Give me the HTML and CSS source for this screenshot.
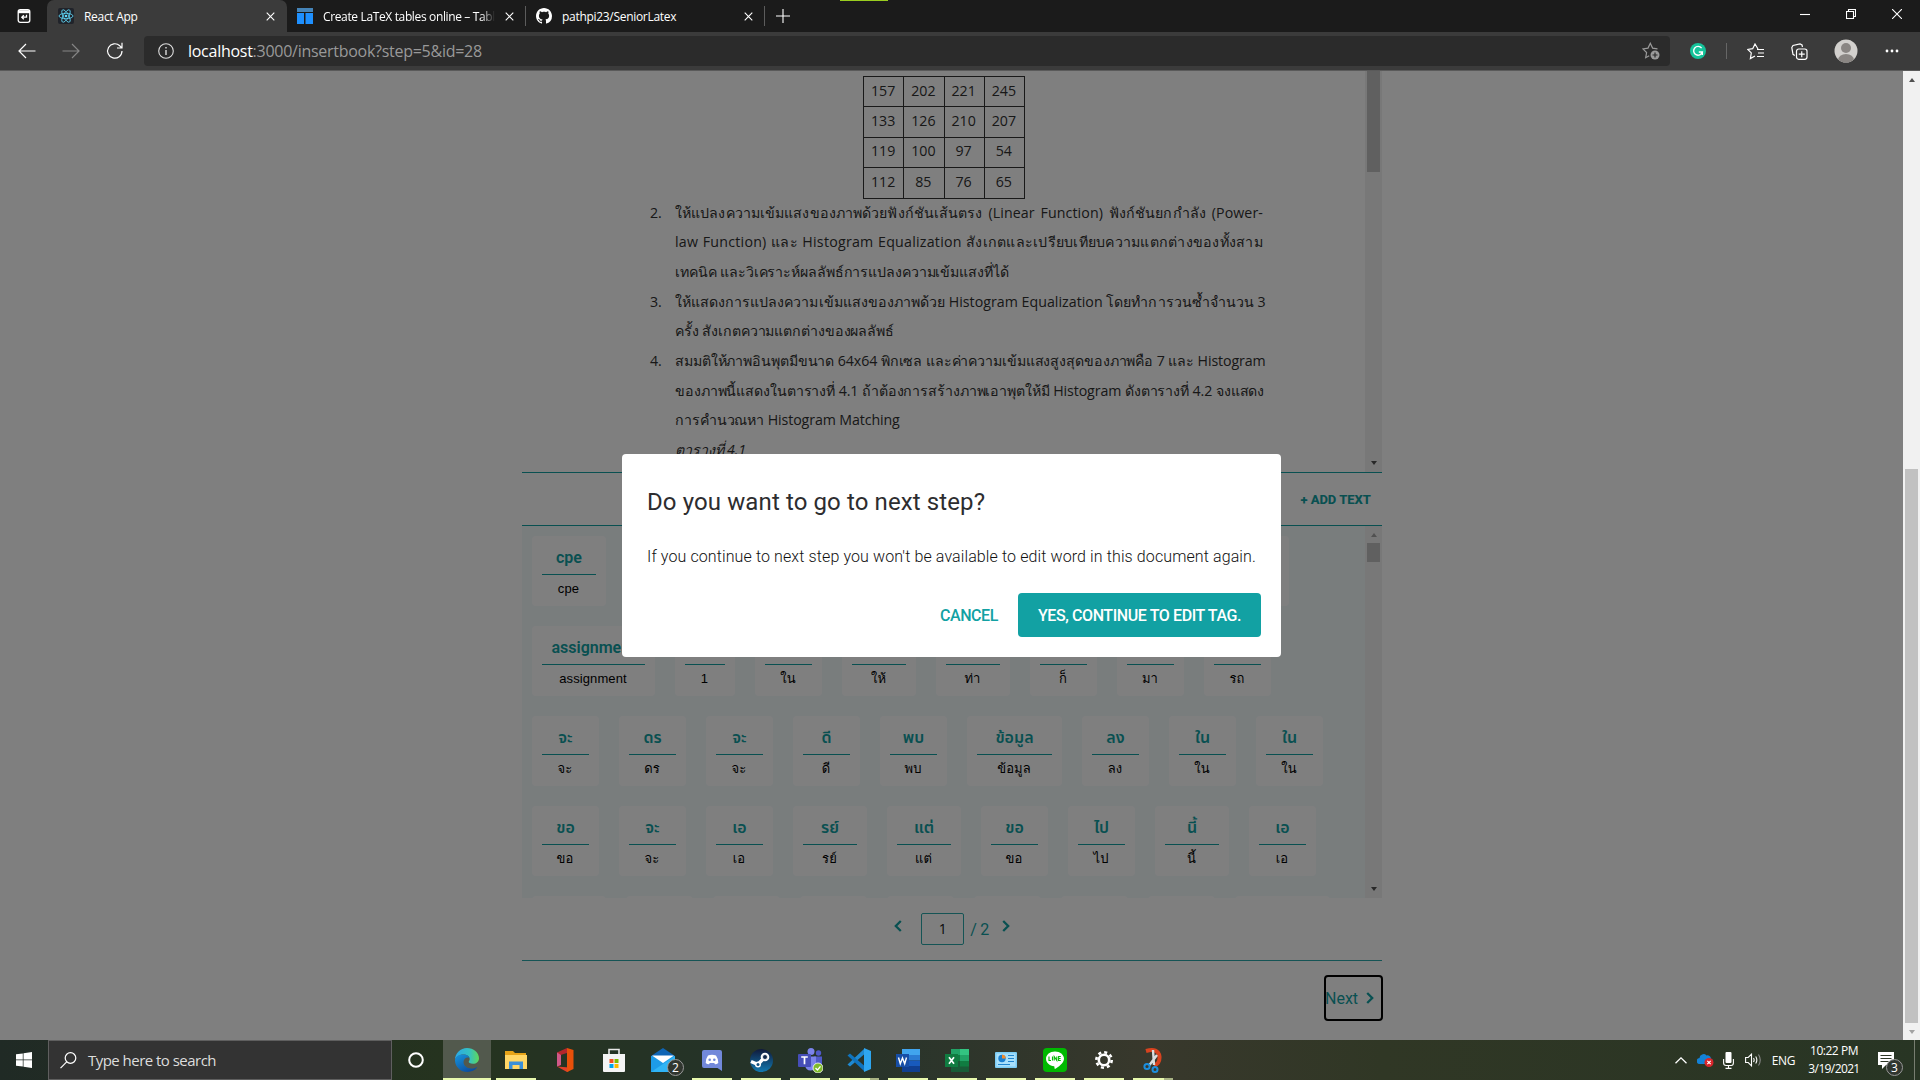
FILE: index.html
```
<!DOCTYPE html>
<html lang="th">
<head>
<meta charset="utf-8">
<title>React App</title>
<link rel="stylesheet" href="styles.css">
</head>
<body>
<div class="desktop">
  <header class="tabs">
    <svg class="tab-menu" width="16" height="16" viewBox="0 0 16 16" fill="none" stroke="#fff" stroke-width="1.3"><rect x="2.2" y="1.7" width="11.6" height="12.6" rx="2"/><path d="M2 3.7h12" stroke-width="3"/><path d="M10.5 6.8v2.4H5.8M7.8 7.2l-2 2 2 2"/></svg>
    <div class="tab active">
      <svg width="16" height="16" viewBox="0 0 16 16"><rect width="16" height="16" rx="2" fill="#20232a"/><g fill="none" stroke="#61dafb" stroke-width=".8"><ellipse cx="8" cy="8" rx="7" ry="2.7"/><ellipse cx="8" cy="8" rx="7" ry="2.7" transform="rotate(60 8 8)"/><ellipse cx="8" cy="8" rx="7" ry="2.7" transform="rotate(120 8 8)"/></g><circle cx="8" cy="8" r="1.3" fill="#61dafb"/></svg>
      <span class="tab-title">React App</span>
      <svg class="x" width="9" height="9" viewBox="0 0 9 9"><path d="M.7.7l7.6 7.6M8.3.7L.7 8.3"/></svg>
    </div>
    <div class="tab second">
      <svg width="16" height="16" viewBox="0 0 16 16"><path d="M0 0h16v4H0z" fill="#4584b8"/><path d="M0 5h7v11H0zM8.500 5H16v11H8.500z" fill="#1e90ff"/></svg>
      <span class="tab-title clip">Create LaTeX tables online – Tabl</span>
      <svg class="x" width="9" height="9" viewBox="0 0 9 9"><path d="M.7.7l7.6 7.6M8.3.7L.7 8.3"/></svg>
    </div>
    <div class="tab third">
      <svg width="16" height="16" viewBox="0 0 16 16" fill="#fff"><path d="M8 0C3.58 0 0 3.58 0 8c0 3.54 2.29 6.53 5.47 7.59.4.07.55-.17.55-.38 0-.19-.01-.82-.01-1.490-2.010.37-2.530-.49-2.690-.94-.09-.23-.48-.94-.82-1.130-.28-.15-.68-.52-.01-.53.63-.01 1.080.58 1.230.82.72 1.210 1.870.87 2.330.66.07-.52.28-.87.51-1.070-1.780-.2-3.640-.89-3.640-3.950 0-.87.31-1.590.82-2.150-.08-.2-.36-1.020.08-2.120 0 0 .67-.21 2.200.82.64-.18 1.320-.27 2-.27s1.360.09 2 .27c1.530-1.040 2.200-.82 2.200-.82.44 1.100.16 1.920.08 2.120.51.56.82 1.270.82 2.150 0 3.070-1.870 3.750-3.650 3.950.29.25.54.73.54 1.480 0 1.070-.01 1.930-.01 2.200 0 .21.15.46.55.38A8.010 8.010 0 0 0 16 8c0-4.420-3.580-8-8-8z"/></svg>
      <span class="tab-title">pathpi23/SeniorLatex</span>
      <svg class="x" width="9" height="9" viewBox="0 0 9 9"><path d="M.7.7l7.6 7.6M8.3.7L.7 8.3"/></svg>
    </div>
    <svg class="plus" width="14" height="14" viewBox="0 0 14 14"><path d="M7 0v14M0 7h14"/></svg>
    <i class="green-mark"></i>
    <div class="window-buttons">
      <svg width="10" height="10" viewBox="0 0 10 10"><path d="M0 5.500h10"/></svg>
      <svg width="10" height="10" viewBox="0 0 10 10"><path d="M.5 2.500h7v7h-7zM2.500 2.500v-2h7v7h-2"/></svg>
      <svg width="10" height="10" viewBox="0 0 10 10"><path d="M0 0l10 10M10 0L0 10"/></svg>
    </div>
  </header>

  <nav class="toolbar">
    <svg class="nav-icon" width="18" height="16" viewBox="0 0 18 16"><path d="M17.500 8H1M8 1L1 8l7 7"/></svg>
    <svg class="nav-icon dim" width="18" height="16" viewBox="0 0 18 16"><path d="M.5 8H17M10 1l7 7-7 7"/></svg>
    <svg class="nav-icon" width="18" height="18" viewBox="0 0 18 18"><path d="M16 9a7.200 7.200 0 1 1-2.200-5.200L15.800 6M16 .8V6h-5"/></svg>
    <div class="address">
      <svg width="16" height="16" viewBox="0 0 16 16" fill="none" stroke="#ddd" stroke-width="1.100"><circle cx="8" cy="8" r="7.300"/><path d="M8 7v5M8 4v1.500" stroke-width="1.400"/></svg>
      <span class="url"><b>localhost</b>:3000/insertbook?step=5&amp;id=28</span>
      <svg class="fav" width="18" height="18" viewBox="0 0 18 18" fill="none" stroke="#9a9a9a" stroke-width="1.200"><path d="M15.500 6.800l-4.900-.7L8.300 1.300 6 6.100.9 6.900l3.700 3.600-.9 5.200 3.500-1.900"/><circle cx="13" cy="13" r="4.500" fill="#9a9a9a" stroke="none"/><path d="M13 10.500v5M10.500 13h5" stroke="#2b2b2b"/></svg>
    </div>
    <svg class="gram" width="16" height="16" viewBox="0 0 16 16"><circle cx="8" cy="8" r="8" fill="#15c39a"/><path d="M11.600 5.200A4.400 4.400 0 1 0 12.300 9H8.800M12.300 9v3" fill="none" stroke="#fff" stroke-width="1.400"/></svg>
    <i class="bar-sep"></i>
    <svg class="star-list" width="17" height="17" viewBox="0 0 17 17" fill="none" stroke="#fff" stroke-width="1.200"><path d="M11 6L8 1 5.700 5.700.8 6.400l3.500 3.500-.9 5.600 4.600-2.600M10 6.500h7M11 10h6M10 13.500h7"/></svg>
    <svg class="collections" width="17" height="17" viewBox="0 0 17 17" fill="none" stroke="#fff" stroke-width="1.200"><path d="M3.800 12.500L2 11.300.8 4.500 2 2.500 9 .8l2 1.200.5 2"/><rect x="5.500" y="6" width="10.500" height="10.300" rx="2.200"/><path d="M10.750 8.200v6M7.750 11.200h6"/></svg>
    <svg class="avatar" width="24" height="24" viewBox="0 0 24 24"><clipPath id="face"><circle cx="12" cy="12" r="11.500"/></clipPath><g clip-path="url(#face)"><path d="M0 0h24v24H0z" fill="#d2d0cd"/><circle cx="12" cy="9" r="5" fill="#8a8683"/><ellipse cx="12" cy="21" rx="8" ry="6" fill="#8a8683"/></g></svg>
    <svg class="dots" width="14" height="4" viewBox="0 0 14 4" fill="#fff"><circle cx="2" cy="2" r="1.400"/><circle cx="7" cy="2" r="1.400"/><circle cx="12" cy="2" r="1.400"/></svg>
  </nav>

  <main class="page">
    <div class="view">
      <div class="column">
        <section class="doc-pane">
          <div class="doc">
            <table class="matrix">
              <tr><td>157</td><td>202</td><td>221</td><td>245</td></tr>
              <tr><td>133</td><td>126</td><td>210</td><td>207</td></tr>
              <tr class="faint"><td>119</td><td>100</td><td>97</td><td>54</td></tr>
              <tr><td>112</td><td>85</td><td>76</td><td>65</td></tr>
            </table>
            <div class="item"><span>2.</span><div>
              <p class="full loose">ให้แปลงความเข้มแสงของภาพด้วยฟังก์ชันเส้นตรง (Linear Function) ฟังก์ชันยกกำลัง (Power-</p>
              <p class="full looser">law Function) และ Histogram Equalization สังเกตและเปรียบเทียบความแตกต่างของทั้งสาม</p>
              <p>เทคนิค และวิเคราะห์ผลลัพธ์การแปลงความเข้มแสงที่ได้</p></div></div>
            <div class="item"><span>3.</span><div>
              <p class="full even">ให้แสดงการแปลงความเข้มแสงของภาพด้วย Histogram Equalization โดยทำการวนซ้ำจำนวน 3</p>
              <p>ครั้ง สังเกตความแตกต่างของผลลัพธ์</p></div></div>
            <div class="item"><span>4.</span><div>
              <p class="full">สมมติให้ภาพอินพุตมีขนาด 64x64 พิกเซล และค่าความเข้มแสงสูงสุดของภาพคือ 7 และ Histogram</p>
              <p class="full">ของภาพนี้แสดงในตารางที่ 4.1 ถ้าต้องการสร้างภาพเอาพุตให้มี Histogram ดังตารางที่ 4.2 จงแสดง</p>
              <p>การคำนวณหา Histogram Matching</p>
              <p class="caption">ตารางที่ 4.1</p></div></div>
          </div>
          <div class="scroll doc-scroll"><i class="thumb"></i><i class="down"></i></div>
        </section>
        <div class="text-bar">+ ADD TEXT</div>
        <section class="words-pane">
          <div class="words">
            <div class="row first"><div class="card w74"><b>cpe</b><span>cpe</span></div><div class="card w67"><b></b></div></div>
            <div class="row">
              <div class="card w123"><b>assignment</b><span>assignment</span></div>
              <div class="card w60"><b>1</b><span>1</span></div>
              <div class="card w67"><b>ใน</b><span>ใน</span></div>
              <div class="card w74"><b>ให้</b><span>ให้</span></div>
              <div class="card w74"><b>ท่า</b><span>ท่า</span></div>
              <div class="card w67"><b>ก็</b><span>ก็</span></div>
              <div class="card w67"><b>มา</b><span>มา</span></div>
              <div class="card w67"><b>รถ</b><span>รถ</span></div>
            </div>
            <div class="row">
              <div class="card w67"><b>จะ</b><span>จะ</span></div>
              <div class="card w67"><b>ดร</b><span>ดร</span></div>
              <div class="card w67"><b>จะ</b><span>จะ</span></div>
              <div class="card w67"><b>ดี</b><span>ดี</span></div>
              <div class="card w67"><b>พบ</b><span>พบ</span></div>
              <div class="card w95"><b>ข้อมูล</b><span>ข้อมูล</span></div>
              <div class="card w67"><b>ลง</b><span>ลง</span></div>
              <div class="card w67"><b>ใน</b><span>ใน</span></div>
              <div class="card w67"><b>ใน</b><span>ใน</span></div>
            </div>
            <div class="row">
              <div class="card w67"><b>ขอ</b><span>ขอ</span></div>
              <div class="card w67"><b>จะ</b><span>จะ</span></div>
              <div class="card w67"><b>เอ</b><span>เอ</span></div>
              <div class="card w74"><b>รย์</b><span>รย์</span></div>
              <div class="card w74"><b>แต่</b><span>แต่</span></div>
              <div class="card w67"><b>ขอ</b><span>ขอ</span></div>
              <div class="card w67"><b>ไป</b><span>ไป</span></div>
              <div class="card w74"><b>นี้</b><span>นี้</span></div>
              <div class="card w67"><b>เอ</b><span>เอ</span></div>
            </div>
            <div class="row">
              <div class="card w74"></div><div class="card w67"></div><div class="card w67"></div><div class="card w67"></div><div class="card w67"></div><div class="card w67"></div><div class="card w67"></div><div class="card w67"></div><div class="card w95"></div>
            </div>
          </div>
          <div class="scroll words-scroll"><i class="up"></i><i class="thumb"></i><i class="down"></i></div>
        </section>
        <div class="pager">
          <svg width="8" height="12" viewBox="0 0 8 12"><path d="M6.800 1L1.800 6l5 5"/></svg>
          <span class="page-box">1</span>
          <span class="total">/ 2</span>
          <svg width="8" height="12" viewBox="0 0 8 12"><path d="M1.200 1l5 5-5 5"/></svg>
        </div>
        <div class="footer"><div class="next">Next<svg width="8" height="12" viewBox="0 0 8 12"><path d="M1.200 1l5 5-5 5"/></svg></div></div>
      </div>
      <div class="backdrop">
        <div class="dialog">
          <h2>Do you want to go to next step?</h2>
          <p>If you continue to next step you won't be available to edit word in this document again.</p>
          <div class="actions"><span class="cancel">CANCEL</span><span class="confirm">YES, CONTINUE TO EDIT TAG.</span></div>
        </div>
      </div>
    </div>
    <div class="scroll page-scroll"><i class="up"></i><i class="thumb"></i><i class="down"></i></div>
  </main>

  <footer class="taskbar">
    <div class="start"><svg width="16" height="16" viewBox="0 0 16 16" fill="#fff"><path d="M0 2.300l6.800-.9v6.200H0zM7.500 1.300L16 .1v7.500H7.500zM0 8.300h6.800v6.300L0 13.700zM7.500 8.300H16v7.600l-8.500-1.200z"/></svg></div>
    <div class="search"><svg width="17" height="17" viewBox="0 0 17 17" fill="none" stroke="#fff" stroke-width="1.200"><circle cx="10.500" cy="6" r="5.300"/><path d="M6.700 9.800L.5 16.200"/></svg><span>Type here to search</span></div>
    <div class="apps">
      <div class="app"><svg width="16" height="16" viewBox="0 0 16 16"><circle cx="8" cy="8" r="6.800" fill="none" stroke="#fff" stroke-width="2"/></svg></div>
      <div class="app current"><svg width="24" height="24" viewBox="0 0 24 24"><defs><linearGradient id="e1" x1="0" x2="1"><stop offset="0" stop-color="#2aa8e8"/><stop offset=".6" stop-color="#35c1c1"/><stop offset="1" stop-color="#5fd85a"/></linearGradient><linearGradient id="e2" x1="0" x2=".7" y2="1"><stop offset="0" stop-color="#1795dc"/><stop offset="1" stop-color="#0c4c9e"/></linearGradient></defs><path d="M0 12C0 5 5.500 0 12 0s12 4.700 12 10.200c0 3.400-2.600 5.600-6 5.600-3 0-4.300-1.200-4.300-2 0-.6 1-1.100 1-2.800C14.700 8.500 12 6.500 8.500 6.500 4 6.500.6 9 0 12z" fill="url(#e1)"/><path d="M0 12c.4-3.500 4-5.500 8.500-5.500 3.300 0 5.500 1.600 6 3.400-2.300-1.400-6 .3-6 4.100 0 3.600 3.500 6.500 8 6.500 2 0 3.700-.6 5-1.300.5-.2.700 0 .5.400C20 22.500 16.500 24 12.500 24 5.500 24-.2 18.500 0 12z" fill="url(#e2)"/></svg></div>
      <div class="app open"><svg width="22" height="20" viewBox="0 0 22 20"><path d="M0 1h8l2 2h11v4H0z" fill="#e6a318"/><path d="M0 5h22v14H0z" fill="#ffd666"/><path d="M4 19v-7.500h14V19h-3.500v-4h-7v4z" fill="#3a8fd8"/></svg></div>
      <div class="app"><svg width="20" height="24" viewBox="0 0 20 24"><path d="M12 0L2 4.500v14L5.500 17V7L12 5z" fill="#b4262c"/><path d="M2 18.500L12 24l2-1v-3.500z" fill="#e0402a"/><path d="M2 4.500v14L6 17V7z" fill="#d05888"/><path d="M12 0l6.500 2v19L12 24z" fill="#e8500a"/></svg></div>
      <div class="app"><svg width="24" height="24" viewBox="0 0 24 24"><path d="M7 7V1.500h10V7" fill="none" stroke="#e8e8e8" stroke-width="1.600"/><path d="M1 6h22v17a1 1 0 0 1-1 1H2a1 1 0 0 1-1-1z" fill="#f5f5f5"/><path d="M7.500 11h4v4h-4z" fill="#f25022"/><path d="M12.500 11h4v4h-4z" fill="#7fba00"/><path d="M7.500 16h4v4h-4z" fill="#00a4ef"/><path d="M12.500 16h4v4h-4z" fill="#ffb900"/></svg></div>
      <div class="app mail"><svg width="24" height="24" viewBox="0 0 24 24"><path d="M0 8l12-8 12 8v4H0z" fill="#0f65b5"/><path d="M0 8h24v16H0z" fill="#1d9be8"/><path d="M0 24L24 8v16z" fill="#2fb4f5"/><path d="M1 7.500h22L12 15z" fill="#fff"/></svg><span class="badge">2</span></div>
      <div class="app open"><svg width="20" height="21" viewBox="0 0 20 21"><path d="M2 0h16a2 2 0 0 1 2 2v19l-4.500-3H2a2 2 0 0 1-2-2V2a2 2 0 0 1 2-2z" fill="#7289da"/><path d="M6 5.500q4-1.500 8 0 2.500 3.500 2.300 7.500Q14.500 14.500 13 14.300l-.8-1.300H7.800L7 14.300Q5 14.300 3.700 13 3.500 9 6 5.500z" fill="#fff"/><circle cx="7.700" cy="9.700" r="1.300" fill="#7289da"/><circle cx="12.300" cy="9.700" r="1.300" fill="#7289da"/></svg></div>
      <div class="app open"><svg width="23" height="23" viewBox="0 0 23 23"><defs><linearGradient id="st" y2="1" x2="0"><stop offset="0" stop-color="#10193a"/><stop offset="1" stop-color="#1279b0"/></linearGradient></defs><circle cx="11.500" cy="11.500" r="11.500" fill="url(#st)"/><path d="M1 12.500l7 3L14 9" fill="none" stroke="#fff" stroke-width="3.500"/><circle cx="15" cy="8" r="4.300" fill="#fff"/><circle cx="15" cy="8" r="2.500" fill="#10284a" stroke="#fff" stroke-width=".8"/><circle cx="8" cy="15.500" r="3" fill="#fff"/><circle cx="8" cy="15.500" r="1.500" fill="#12507e"/></svg></div>
      <div class="app open"><svg width="25" height="25" viewBox="0 0 25 25"><circle cx="20.500" cy="5" r="2.700" fill="#5059c9"/><circle cx="13" cy="3.500" r="3.500" fill="#7b83eb"/><path d="M16 8.500h8v7a4 4 0 0 1-8 2z" fill="#5059c9"/><path d="M7 8.500h11V17a5.500 5.500 0 0 1-11 0z" fill="#7b83eb"/><rect y="6" width="13" height="13" rx="1" fill="#464eb8"/><path d="M3.200 9h6.600M6.500 9v7.300" stroke="#fff" stroke-width="1.700"/><circle cx="20" cy="20" r="5" fill="#7fba2a" stroke="#fff" stroke-width=".8"/><path d="M17.500 20l2 2 3-3.700" fill="none" stroke="#fff" stroke-width="1.300"/></svg></div>
      <div class="app open more"><svg width="24" height="24" viewBox="0 0 24 24"><path d="M17 6.500L3 18.500l-2.500-2L17 1z" fill="#1f8ad2"/><path d="M17 17.500L3 5.500l-2.500 2L17 23z" fill="#0f74bf"/><path d="M17 0l7 3v18l-7 3z" fill="#2ea6f0"/></svg></div>
      <div class="app open"><svg width="24" height="23" viewBox="0 0 24 23"><path d="M6 0h18v6H6z" fill="#41a5ee"/><path d="M6 6h18v5.500H6z" fill="#2b7cd3"/><path d="M6 11.500h18V17H6z" fill="#185abd"/><path d="M6 17h18v6H6z" fill="#103f91"/><path d="M0 5h13v13H0z" fill="#174ea6"/><path d="M2.500 8.500l1.800 6.200L6.500 9l2.200 5.700 1.800-6.200" fill="none" stroke="#fff" stroke-width="1.400"/></svg></div>
      <div class="app open"><svg width="24" height="23" viewBox="0 0 24 23"><path d="M6 0h9v6H6z" fill="#21a366"/><path d="M15 0h9v6h-9z" fill="#33c481"/><path d="M6 6h9v6H6z" fill="#107c41"/><path d="M15 6h9v6h-9z" fill="#21a366"/><path d="M6 12h18v11H6z" fill="#185c37"/><path d="M15 12h9v5.500h-9z" fill="#107c41"/><path d="M0 5h13v13H0z" fill="#107c41"/><path d="M4 8.300l5 6.500M9 8.300l-5 6.500" stroke="#fff" stroke-width="1.700"/></svg></div>
      <div class="app open"><svg width="22" height="16" viewBox="0 0 22 16"><rect width="22" height="16" rx="1" fill="#7ccdf5"/><rect x="1.500" y="1.500" width="19" height="13" fill="#a9e0fb"/><circle cx="7" cy="6.500" r="3.700" fill="#1a7fd0"/><path d="M7 6.500V2.800a3.700 3.700 0 0 1 3.700 3.700z" fill="#f58a2a"/><path d="M13 3.500h6M13 6.500h6M13 9.500h6M3 12.500h12" stroke="#2085cf" stroke-width="1.200"/></svg></div>
      <div class="app open"><svg width="24" height="24" viewBox="0 0 24 24"><rect width="24" height="24" rx="4" fill="#00b900"/><path d="M12 3.500c5 0 9 3.200 9 7.200 0 4.300-6 8.500-9 10.300-.6 0-.4-2-.8-2.700C6.500 17.800 3 14.700 3 10.700c0-4 4-7.200 9-7.200z" fill="#fff"/><path d="M6 8.500v4h2M9.500 8.500v4M11.200 12.500v-4l2.600 4v-4M17.800 8.500h-2.200v4h2.200M15.600 10.500h2" fill="none" stroke="#00b900" stroke-width="1.100"/></svg></div>
      <div class="app open"><svg width="18" height="18" viewBox="0 0 18 18" fill="none" stroke="#fff"><circle cx="9" cy="9" r="5.200" stroke-width="2.600"/><circle cx="9" cy="9" r="7.700" stroke-width="2.600" stroke-dasharray="3.020 3.020"/></svg></div>
      <div class="app open more"><svg width="20" height="25" viewBox="0 0 20 25"><path d="M3 3q12-3.500 13.500 5.500.5 7-5.500 9" fill="none" stroke="#d8431f" stroke-width="4"/><path d="M10 2l1 15M14 7L6.500 17" stroke="#d8dde0" stroke-width="2.400"/><circle cx="4" cy="18.500" r="2.600" fill="none" stroke="#1c8ede" stroke-width="2"/><circle cx="12" cy="21.500" r="2.500" fill="none" stroke="#1c8ede" stroke-width="2"/></svg></div>
    </div>
    <div class="tray">
      <svg width="12" height="7" viewBox="0 0 12 7" fill="none" stroke="#fff" stroke-width="1.300"><path d="M.5 6.300L6 .9l5.500 5.400"/></svg>
      <svg class="cloud" width="17" height="14" viewBox="0 0 17 14"><path d="M3 11a3 3 0 0 1-.5-6 4 4 0 0 1 7-2.500A3.500 3.500 0 0 1 14 5.500q1.500.5 1.500 2.500 0 3-3 3z" fill="#1382d8"/><circle cx="12" cy="9.500" r="4.500" fill="#d8262c"/><path d="M10.300 7.800l3.400 3.400M13.700 7.800l-3.400 3.400" stroke="#fff" stroke-width="1.200"/></svg>
      <svg class="mic" width="11" height="17" viewBox="0 0 11 17"><rect x="2.500" width="6" height="11" rx="1" fill="#fff"/><path d="M.6 7v4q0 2.500 2.500 2.500h5q2.300 0 2.300-2.500V7M5.500 13.500v3M2.500 16.400h6" fill="none" stroke="#fff" stroke-width="1.100"/></svg>
      <svg class="sound" width="17" height="14" viewBox="0 0 17 14" fill="none" stroke="#fff" stroke-width="1.100"><path d="M.6 4.500h2.600L6.500 1.200v11.600L3.200 9.500H.6zM8.500 5q1.300 2 0 4M10.700 3.500q2.300 3.500 0 7"/><path d="M13.500 1.500q3.500 5.500 0 11" stroke="#888"/></svg>
      <span class="lang">ENG</span>
      <div class="clock"><span>10:22 PM</span><span class="date">3/19/2021</span></div>
      <div class="notes"><svg width="16" height="17" viewBox="0 0 16 17"><path d="M0 0h16v13H8l-4 4v-4H0z" fill="#fff"/><path d="M2.500 3.500h11M2.500 6.500h11M2.500 9.500h8" stroke="#2d3726" stroke-width="1.100"/></svg><span class="badge">3</span></div>
      <i class="edge-line"></i>
    </div>
  </footer>
</div>
</body>
</html>
```
FILE: styles.css
```
* { box-sizing: border-box; }
body { margin: 0; overflow: hidden; }
svg { display: block; flex: none; }
p, h2 { margin: 0; }
.desktop { display: flex; flex-direction: column; width: 1920px; height: 1080px; font-family: "Open Sans", "Noto Sans", sans-serif; }

/* tab strip */
.tabs { position: relative; display: flex; align-items: center; height: 32px; background: #1b1b1b; }
.tab-menu { margin: 0 15px 0 16px; }
.tab { display: flex; align-items: center; height: 32px; color: #fff; font-size: 12px; }
.tab.active { width: 240px; padding: 0 12px 0 11px; background: #3b3b3b; border-radius: 7px 7px 0 0; }
.tab.second { width: 239px; padding: 0 11px 0 10px; border-right: 1px solid #5c5c5c; height: 20px; }
.tab.third { width: 239px; padding: 0 11px 0 10px; border-right: 1px solid #5c5c5c; height: 20px; }
.tab-title { margin-left: 10px; letter-spacing: -.3px; white-space: nowrap; }
.tab-title.clip { width: 172px; overflow: hidden; letter-spacing: -.36px; mask-image: linear-gradient(90deg, #000 92%, transparent); }
.x { margin-left: auto; }
.x, .plus, .window-buttons svg { fill: none; stroke: #fff; stroke-width: 1.1; }
.plus { margin-left: 11px; }
.green-mark { position: absolute; left: 840px; top: 0; width: 48px; height: 1px; background: #9acd1f; }
.window-buttons { display: flex; gap: 36px; margin-left: auto; padding: 0 18px 4px 0; }

/* toolbar */
.toolbar { display: flex; align-items: center; height: 39px; padding: 0 21px 0 18px; background: #3b3b3b; border-bottom: 1px solid #5a5a5a; }
.nav-icon { margin-right: 26px; fill: none; stroke: #fff; stroke-width: 1.2; }
.nav-icon.dim { stroke: #858585; }
.nav-icon + .nav-icon + .nav-icon { margin-right: 20px; }
.address { display: flex; align-items: center; width: 1527px; height: 30px; padding: 0 10px 0 14px; background: #2b2b2b; border-radius: 4px; }
.url { margin-left: 14px; color: #999; font-size: 16px; letter-spacing: -.27px; }
.url b { color: #fff; font-weight: 400; }
.fav { margin-left: auto; }
.gram { margin-left: 20px; }
.bar-sep { width: 1px; height: 16px; margin: 0 20px; background: #666; }
.collections { margin-left: 27px; }
.avatar { margin-left: 26px; }
.dots { margin-left: 27px; }

/* page */
.page { display: flex; height: 969px; background: #fff; }
.view { position: relative; width: 1903px; overflow: hidden; }
.column { width: 860px; margin-left: 522px; }
.doc-pane { display: flex; height: 402px; overflow: hidden; border-bottom: 1px solid #12a1a3; }
.doc { width: 843px; padding: 5px 0 0 128px; color: #303030; font-size: 14.2px; }
.matrix { width: 162px; margin-left: 213px; border-collapse: collapse; table-layout: fixed; border: 1px solid #222; }
.matrix td { height: 30.4px; padding: 0 1px 3px 0; border: 1px solid #333; text-align: center; }
.matrix .faint td { border-top-color: #aaa; }
.item { display: flex; margin-left: 0; line-height: 29.65px; transform: translateY(-1px); }
.item > span { width: 25px; }
.item p { width: 588px; white-space: nowrap; letter-spacing: -.1px; }
.item .full { text-align: justify; text-align-last: justify; }
.item .loose { letter-spacing: .1px; }
.item .looser { letter-spacing: .25px; }
.item .even { letter-spacing: .03px; }
.item .caption { font-style: italic; }

.scroll { display: flex; flex-direction: column; align-items: center; flex: none; width: 17px; background: #f1f1f1; }
.thumb { width: 13px; background: #c1c1c1; }
.up { width: 0; height: 0; border: 3.5px solid transparent; border-top: 0; border-bottom: 4px solid #a3a3a3; }
.down { width: 0; height: 0; margin-top: auto; border: 3.5px solid transparent; border-bottom: 0; border-top: 4px solid #505050; }
.doc-scroll .thumb { height: 101px; }
.doc-scroll .down { margin-bottom: 7px; }
.words-scroll .up { margin: 7px 0 6px; }
.words-scroll .thumb { height: 19px; }
.words-scroll .down { margin-bottom: 7px; }
.page-scroll .up { margin-top: 7px; border-bottom-color: #505050; }
.page-scroll .thumb { height: 554px; margin-top: 387px; }
.page-scroll .down { margin-bottom: 6px; border-top-color: #a3a3a3; }

.text-bar { display: flex; align-items: center; justify-content: flex-end; height: 53px; padding: 0 11px 0 0; border-bottom: 1px solid #12a1a3; color: #12a1a3; font: 800 13px Roboto, sans-serif; }
.words-pane { display: flex; height: 372px; overflow: hidden; background: #f2fafb; }
.words { display: flex; flex-direction: column; gap: 20px; width: 843px; padding: 10px; }
.row { display: flex; flex: none; gap: 20px; height: 70px; }
.row.first { width: 757px; justify-content: space-between; }
.card { flex: none; padding: 0 10px; background: #fff; border-radius: 4px; text-align: center; white-space: nowrap; }
.card b { display: block; height: 39px; padding-top: 6px; border-bottom: 1px solid #12a1a3; color: #12a1a3; font: 600 16px/32px Roboto, "Noto Sans Thai", sans-serif; }
.card span { display: block; margin-right: 1px; color: #000; font: 13px/28px "Liberation Sans", Loma, sans-serif; letter-spacing: .1px; }
.w60 { width: 60px; }
.w67 { width: 67px; }
.w74 { width: 74px; }
.w95 { width: 95px; }
.w123 { width: 123px; }

.pager { display: flex; justify-content: center; height: 63px; padding: 15px 0 0; border-bottom: 1px solid #2aa9aa; color: #12a1a3; }
.pager svg, .next svg { fill: none; stroke: #12a1a3; stroke-width: 2.3; }
.pager svg { margin-top: 7px; }
.page-box { width: 43px; height: 32px; margin-left: 19px; border: 1px solid #2aa9aa; border-radius: 2px; color: #111; font: 14px/30px "Open Sans", sans-serif; text-align: center; }
.total { margin: 0 13px 0 6px; font: 16px/33px Roboto, sans-serif; letter-spacing: -.3px; }
.footer { display: flex; justify-content: flex-end; padding-top: 14px; margin-right: -1px; }
.next { display: flex; align-items: center; justify-content: space-between; width: 59px; height: 46px; padding: 0 7px 0 0; border: 2px solid #000; border-radius: 4px; color: #12a1a3; font: 16px Roboto, sans-serif; text-indent: -1px; }

/* dialog */
.backdrop { position: absolute; inset: 0; display: flex; align-items: center; justify-content: center; background: rgba(0, 0, 0, .5); }
.dialog { width: 659px; height: 203px; padding: 31px 20px 20px 25px; background: #fff; border-radius: 4px; font-family: Roboto, sans-serif; color: #2d2d2f; }
.dialog h2 { font-size: 24px; font-weight: 400; line-height: 34px; letter-spacing: .11px; }
.dialog p { margin-top: 26px; color: #111; font-size: 16px; font-weight: 300; line-height: 24px; letter-spacing: .11px; white-space: nowrap; }
.actions { display: flex; justify-content: flex-end; gap: 20px; margin-top: 24px; color: #12a1a3; font-size: 16px; font-weight: 500; line-height: 46px; letter-spacing: -.4px; }
.cancel { width: 58px; letter-spacing: -.45px; }
.confirm { width: 243px; height: 44px; background: #12a1a3; border-radius: 4px; color: #fff; text-align: center; }

/* taskbar */
.taskbar { display: flex; height: 40px; background: linear-gradient(90deg, #202a25, #25331f 23%, #25332a 42%, #38382c 60%, #303725 72%, #283524); color: #fff; }
.start { display: flex; align-items: center; justify-content: center; width: 48px; }
.search { display: flex; align-items: center; gap: 11px; width: 344px; padding-left: 11px; border: 1px solid #5f5f5f; background: #333; color: #ddd; font-size: 15px; letter-spacing: -.53px; }
.apps { display: flex; gap: 1px; }
.app { position: relative; display: flex; align-items: center; justify-content: center; width: 48px; }
.app:first-child { margin-right: 2px; }
.app.current { background: #52594d; box-shadow: inset 0 -2px #e8f9ae; }
.app.open { background: linear-gradient(#e8f9ae, #e8f9ae) center bottom / 40px 2px no-repeat; }
.app.open.more { background: linear-gradient(90deg, #e8f9ae 31px, #a9b485 31px) center bottom / 40px 2px no-repeat; }
.badge { position: absolute; display: flex; align-items: center; justify-content: center; width: 17px; height: 17px; border: 1px solid #999; border-radius: 50%; background: #30362f; color: #fff; font-size: 12px; }
.mail .badge { left: 28px; top: 19px; }
.tray { display: flex; align-items: center; margin-left: auto; }
.cloud { margin-left: 10px; }
.mic { margin-left: 9px; }
.sound { margin-left: 11px; }
.lang { margin-left: 10px; font-size: 12px; letter-spacing: -.4px; }
.clock { display: flex; flex-direction: column; align-items: center; width: 52px; margin-left: 13px; font-size: 12px; line-height: 18px; letter-spacing: -.47px; }
.date { letter-spacing: -.62px; }
.notes { position: relative; width: 26px; margin-left: 18px; }
.notes .badge { left: 8px; top: 7px; }
.edge-line { width: 1px; height: 40px; margin: 0 5px 0 10px; background: #777d70; }
```
